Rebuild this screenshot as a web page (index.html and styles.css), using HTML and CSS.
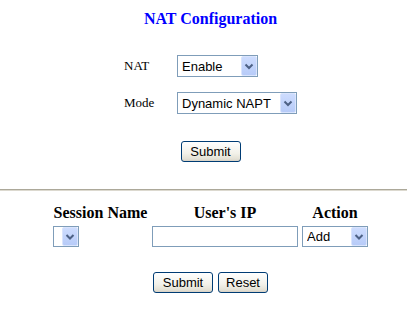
FILE: index.html
```html
<!DOCTYPE html>
<html lang="en">
<head>
  <meta charset="UTF-8">
  <title>NAT Configuration</title>
  <link rel="stylesheet" href="styles.css">
</head>
<body>

<div class="page">
  <h1 class="title">NAT Configuration</h1>
  <form class="nat-form">
    <div class="field-grid">
      <label class="field-label">NAT</label>
      <span class="dropdown w-nat">
        <select><option>Enable</option><option>Disable</option></select>
        <span class="drop-btn"><svg width="14" height="18" viewBox="0 0 14 18"><polyline points="3.5,7.5 7,11 10.5,7.5" fill="none" stroke="#4d6185" stroke-width="2"/></svg></span>
      </span>
      <label class="field-label">Mode</label>
      <span class="dropdown w-mode">
        <select><option>Dynamic NAPT</option><option>Static NAT</option></select>
        <span class="drop-btn"><svg width="14" height="18" viewBox="0 0 14 18"><polyline points="3.5,7.5 7,11 10.5,7.5" fill="none" stroke="#4d6185" stroke-width="2"/></svg></span>
      </span>
    </div>
    <div class="actions first-actions">
      <button type="button" class="btn w-submit">Submit</button>
    </div>
  </form>
</div>

<hr class="divider">

<div class="page">
  <form class="session-form">
    <div class="session-grid">
      <div class="col-head">Session Name</div>
      <div class="col-head">User's IP</div>
      <div class="col-head">Action</div>
      <span class="dropdown w-session">
        <select><option></option></select>
        <span class="drop-btn"><svg width="14" height="17" viewBox="0 0 14 17"><polyline points="3.5,7 7,10.5 10.5,7" fill="none" stroke="#4d6185" stroke-width="2"/></svg></span>
      </span>
      <input type="text" class="text-input">
      <span class="dropdown w-action">
        <select><option>Add</option><option>Delete</option></select>
        <span class="drop-btn"><svg width="14" height="17" viewBox="0 0 14 17"><polyline points="3.5,7 7,10.5 10.5,7" fill="none" stroke="#4d6185" stroke-width="2"/></svg></span>
      </span>
    </div>
    <div class="actions second-actions">
      <button type="button" class="btn w-submit">Submit</button>
      <button type="reset" class="btn w-reset">Reset</button>
    </div>
  </form>
</div>

</body>
</html>
```

FILE: styles.css
```css
* { box-sizing: border-box; }
body { margin: 0; background: #fff; color: #000; font-family: 'Liberation Serif', serif; }
.page { padding-left: 14px; display: flex; flex-direction: column; align-items: center; }

.title { margin: 0; padding-top: 10px; font-size: 16px; line-height: 18px; font-weight: bold; color: #0000ff; }

.field-grid { display: grid; grid-template-columns: 53px 120px; row-gap: 15px; align-items: center; margin-top: 27px; }
.field-label { font-size: 13px; }

.dropdown { position: relative; display: inline-block; height: 22px; }
.dropdown select { -webkit-appearance: none; appearance: none; width: 100%; height: 100%; margin: 0; padding: 0 18px 0 4px; border: 1px solid #7f9db9; border-radius: 0; background: #fff; font-family: 'Liberation Sans', Arial, sans-serif; font-size: 13px; color: #000; }
.drop-btn { position: absolute; top: 1px; right: 1px; bottom: 1px; width: 16px; display: flex; align-items: center; justify-content: center; pointer-events: none; background: linear-gradient(#cddcfe, #b7cbf8); border: 1px solid #d9e4fd; border-radius: 2px; }
.w-nat { width: 81px; }
.w-mode { width: 120px; }
.w-session { width: 26px; height: 21px; justify-self: start; }
.w-action { width: 66px; height: 21px; }

.actions { display: flex; justify-content: center; gap: 5px; }
.first-actions { margin-top: 27px; }
.second-actions { margin-top: 25px; }
.btn { height: 21px; padding: 0; border: 1px solid #003c74; border-radius: 3px; background: linear-gradient(#ffffff, #f2f1e9 60%, #e3e0d4 90%, #d6d0c5); font-family: 'Liberation Sans', Arial, sans-serif; font-size: 13px; color: #000; }
.w-submit { width: 60px; }
.w-reset { width: 50px; }

.divider { margin: 27px 0 0; height: 2px; border: 0; border-top: 1px solid #aca899; border-bottom: 1px solid #dcd9cf; }

.session-form { padding-top: 13px; }
.session-grid { display: grid; grid-template-columns: 95px 146px 66px; column-gap: 4px; row-gap: 4px; }
.col-head { font-size: 16px; line-height: 18px; font-weight: bold; text-align: center; }
.text-input { width: 146px; height: 21px; margin: 0; border: 1px solid #7f9db9; padding: 0 3px; font-family: 'Liberation Sans', Arial, sans-serif; font-size: 13px; }
```
